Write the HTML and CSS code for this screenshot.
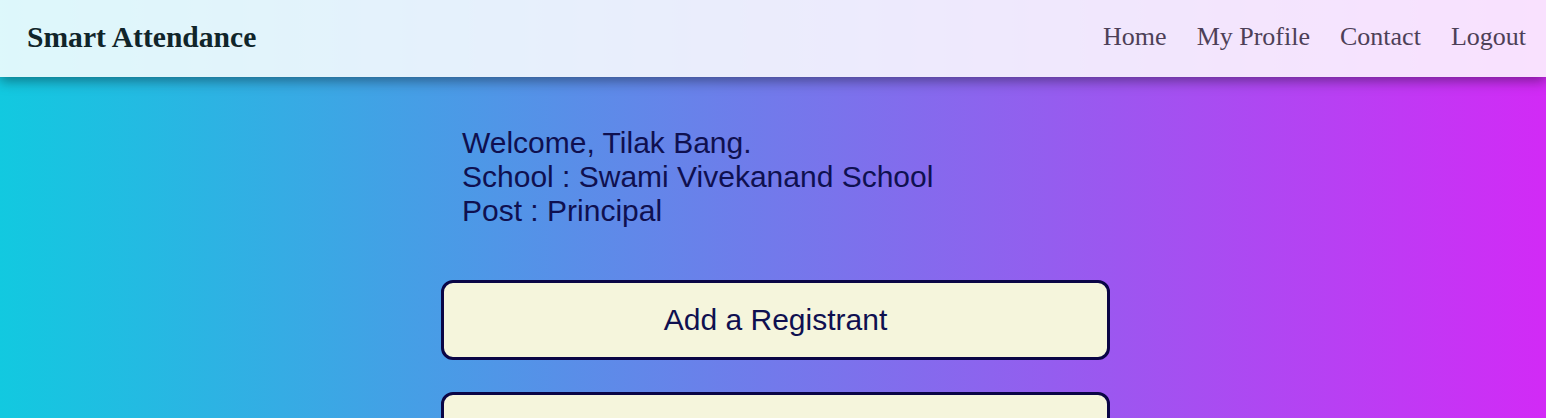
FILE: index.html
```html
<!DOCTYPE html>
<html>
<head>
<meta charset="utf-8">
<link rel="stylesheet" href="styles.css">
</head>
<body>
<header class="topbar">
  <div class="brand">Smart Attendance</div>
  <nav class="nav">
    <a href="#">Home</a>
    <a href="#">My Profile</a>
    <a href="#">Contact</a>
    <a href="#">Logout</a>
  </nav>
</header>
<main class="main">
  <div class="panel">
    <div class="welcome">
      <div>Welcome, Tilak Bang.</div>
      <div>School : Swami Vivekanand School</div>
      <div>Post : Principal</div>
    </div>
    <div class="actions">
      <button class="action">Add a Registrant</button>
      <button class="action">View Attendance</button>
    </div>
  </div>
</main>
</body>
</html>
```
FILE: styles.css
```css
html, body {
  margin: 0;
  padding: 0;
  height: 100%;
}
body {
  background: linear-gradient(to right, #12c9e0, #d22af6);
  font-family: "Liberation Sans", Arial, sans-serif;
  overflow: hidden;
}
.topbar {
  height: 77px;
  box-sizing: border-box;
  display: flex;
  align-items: center;
  justify-content: space-between;
  padding: 0 20px 3px 27px;
  background: rgba(255, 255, 255, 0.86);
  box-shadow: 0 4px 12px rgba(0, 0, 0, 0.4);
  position: relative;
  z-index: 1;
}
.brand {
  font-family: "Liberation Serif", "Times New Roman", serif;
  font-weight: bold;
  font-size: 29.6px;
  color: #10252a;
}
.nav {
  display: flex;
  gap: 30px;
}
.nav a {
  font-family: "Liberation Serif", "Times New Roman", serif;
  font-size: 26px;
  color: #4d4057;
  text-decoration: none;
}
.main {
  display: flex;
  justify-content: center;
  padding-top: 49px;
  padding-left: 5px;
}
.panel {
  width: 669px;
  display: flex;
  flex-direction: column;
}
.welcome {
  padding-left: 21px;
  font-size: 30px;
  line-height: 34px;
  color: #0f1050;
}
.actions {
  margin-top: 52px;
  display: flex;
  flex-direction: column;
  gap: 32px;
}
.action {
  height: 80px;
  width: 100%;
  background: #f5f5dc;
  border: 3px solid #0a0545;
  border-radius: 12px;
  font-family: "Liberation Sans", Arial, sans-serif;
  font-size: 30px;
  color: #0f1050;
  cursor: pointer;
}
```
